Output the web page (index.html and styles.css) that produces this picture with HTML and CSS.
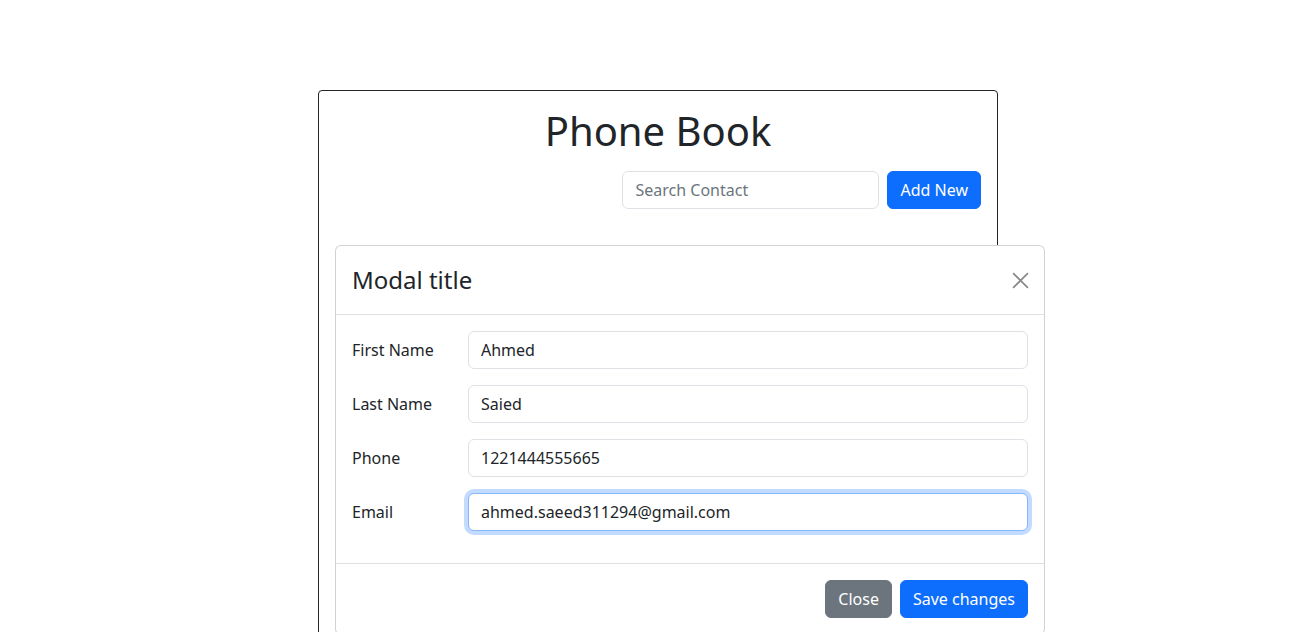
FILE: index.html
```html
<!DOCTYPE html>
<html lang="en">
<head>
<meta charset="utf-8">
<title>Phone Book</title>
<link rel="stylesheet" href="styles.css">
</head>
<body>
<div class="page">
  <div class="book">
    <h1 class="book-title">Phone Book</h1>
    <div class="toolbar">
      <input class="field search" type="text" placeholder="Search Contact">
      <button class="btn btn-primary">Add New</button>
    </div>
  </div>

  <div class="modal">
    <div class="modal-header">
      <h4 class="modal-title">Modal title</h4>
      <button class="btn-close" aria-label="Close">
        <svg width="17" height="17" viewBox="0 0 16 16"><path d="M1 1L15 15M15 1L1 15" stroke="#878787" stroke-width="1.5" fill="none"/></svg>
      </button>
    </div>
    <div class="modal-body">
      <div class="form-row">
        <label class="form-label">First Name</label>
        <input class="field" type="text" value="Ahmed">
      </div>
      <div class="form-row">
        <label class="form-label">Last Name</label>
        <input class="field" type="text" value="Saied">
      </div>
      <div class="form-row">
        <label class="form-label">Phone</label>
        <input class="field" type="text" value="1221444555665">
      </div>
      <div class="form-row">
        <label class="form-label">Email</label>
        <input class="field focused" type="text" value="ahmed.saeed311294@gmail.com">
      </div>
    </div>
    <div class="modal-footer">
      <button class="btn btn-secondary">Close</button>
      <button class="btn btn-primary">Save changes</button>
    </div>
  </div>
</div>
</body>
</html>
```

FILE: styles.css
```css
* { box-sizing: border-box; }
html, body {
  margin: 0;
  padding: 0;
  background: #fff;
  font-family: "Noto Sans", "Open Sans", sans-serif;
  font-size: 16px;
  line-height: 1.5;
  color: #212529;
  overflow: hidden;
}
.page {
  position: relative;
  height: 632px;
  padding-top: 90px;
}
.book {
  width: 680px;
  margin-left: 318px;
  min-height: 700px;
  border: 1px solid #212529;
  border-radius: 4px;
  padding: 16px;
}
.book-title {
  margin: 0 0 16px;
  font-size: 40px;
  font-weight: 400;
  line-height: 1.2;
  text-align: center;
}
.toolbar {
  display: flex;
  justify-content: flex-end;
  gap: 8px;
}
.field {
  display: block;
  width: 100%;
  height: 38px;
  padding: 6px 12px;
  font-family: inherit;
  font-size: 16px;
  line-height: 1.5;
  color: #212529;
  background: #fff;
  border: 1px solid #dee2e6;
  border-radius: 6px;
  outline: none;
}
.field::placeholder { color: #6c757d; opacity: 1; }
.search { width: 257px; }
.field.focused {
  border-color: #86b7fe;
  box-shadow: 0 0 0 4px rgba(13,110,253,.25);
}
.btn {
  display: inline-block;
  height: 38px;
  padding: 6px 12px;
  font-family: inherit;
  font-size: 16px;
  line-height: 1.5;
  border: 1px solid transparent;
  border-radius: 6px;
  color: #fff;
  cursor: pointer;
}
.btn-primary { background: #0d6efd; border-color: #0d6efd; }
.btn-secondary { background: #6c757d; border-color: #6c757d; }

.modal {
  position: absolute;
  left: 335px;
  top: 245px;
  width: 710px;
  background: #fff;
  border: 1px solid rgba(0,0,0,.175);
  border-radius: 6px;
}
.modal-header {
  display: flex;
  align-items: center;
  justify-content: space-between;
  padding: 16px;
  border-bottom: 1px solid #dee2e6;
}
.modal-title {
  margin: 0;
  font-size: 24px;
  font-weight: 400;
  line-height: 1.5;
}
.btn-close {
  width: 24px;
  height: 24px;
  padding: 0;
  margin-right: -4px;
  border: 0;
  background: transparent;
  display: flex;
  align-items: center;
  justify-content: center;
}
.modal-body {
  padding: 16px 16px 0;
}
.form-row {
  display: grid;
  grid-template-columns: 116px 1fr;
  align-items: center;
  margin-bottom: 16px;
}
.form-row:last-child { margin-bottom: 32px; }
.form-label { display: block; }
.modal-footer {
  display: flex;
  justify-content: flex-end;
  gap: 8px;
  padding: 16px 16px 16px;
  border-top: 1px solid #dee2e6;
}
```
